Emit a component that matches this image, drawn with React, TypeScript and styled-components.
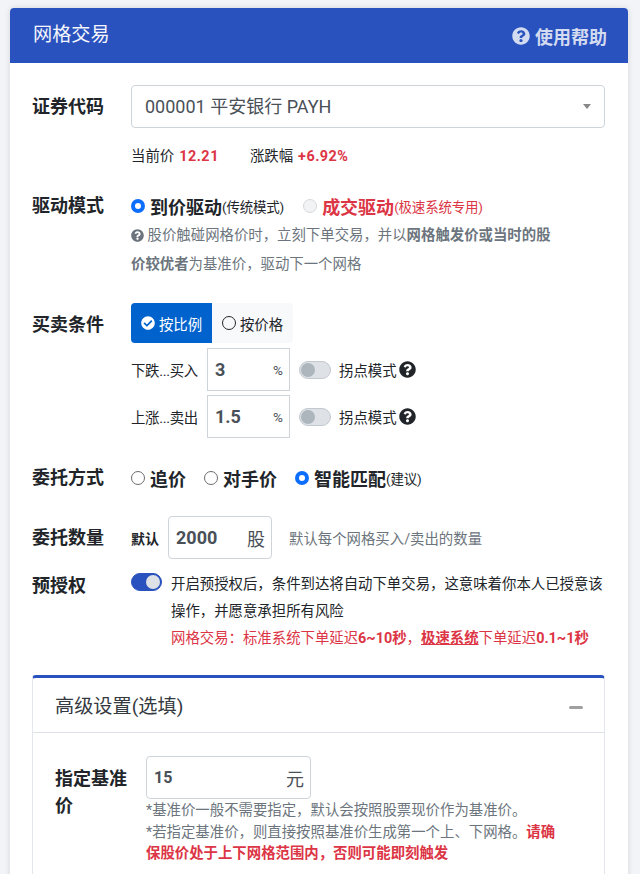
import React from "react";
import styled, { createGlobalStyle } from "styled-components";
import { FaQuestionCircle, FaCheckCircle } from "react-icons/fa";

const GlobalStyle = createGlobalStyle`
	html, body { margin: 0; height: 874px; overflow: hidden; background: #f3f4f8; }
	body { font-family: Roboto, "Noto Sans CJK SC", sans-serif; color: #212529; }
	* { box-sizing: border-box; }
`;

export default function App() {
	return (
		<Page>
			<GlobalStyle />
			<Card>
				<Header>
					<Title>网格交易</Title>
					<Help>
						<FaQuestionCircle size={18} />
						使用帮助
					</Help>
				</Header>

				<Body>
					{/* SECTION Code */}
					<Row $top={22}>
						<Label $line={43}>证券代码</Label>
						<Content>
							<Select>
								000001 平安银行 PAYH
								<Caret />
							</Select>
							<Quote>
								<span>当前价</span>
								<Up>12.21</Up>
								<QuoteGap>涨跌幅</QuoteGap>
								<Up>+6.92%</Up>
							</Quote>
						</Content>
					</Row>

					{/* SECTION Drive mode */}
					<Row $top={26}>
						<Label $line={24}>驱动模式</Label>
						<Content>
							<Options>
								<Radio $checked />
								<OptionText>到价驱动</OptionText>
								<Small>(传统模式)</Small>
								<Radio $disabled $gap={19} />
								<OptionText $red>成交驱动</OptionText>
								<Small $red>(极速系统专用)</Small>
							</Options>
							<Hint>
								<HintIcon><FaQuestionCircle size={13} /></HintIcon> 股价触碰网格价时，立刻下单交易，并以<b>网格触发价或当时的股价较优者</b>为基准价，驱动下一个网格
							</Hint>
						</Content>
					</Row>

					{/* SECTION Conditions */}
					<Row $top={25}>
						<Label $line={44}>买卖条件</Label>
						<Content>
							<Segments>
								<Segment $active>
									<FaCheckCircle size={14} />
									按比例
								</Segment>
								<Segment>
									<Hollow />
									按价格
								</Segment>
							</Segments>
							<Condition label="下跌...买入" value="3" />
							<Condition label="上涨...卖出" value="1.5" />
						</Content>
					</Row>

					{/* SECTION Order type */}
					<Row $top={26}>
						<Label $line={28}>委托方式</Label>
						<Options $height={28}>
							<Radio />
							<OptionText>追价</OptionText>
							<Radio $gap={18} />
							<OptionText>对手价</OptionText>
							<Radio $checked $gap={18} />
							<OptionText>智能匹配</OptionText>
							<Small>(建议)</Small>
						</Options>
					</Row>

					{/* SECTION Quantity */}
					<Row $top={24}>
						<Label $line={43}>委托数量</Label>
						<Quantity>
							<Default>默认</Default>
							<UnitInput $width={104}>
								<Value>2000</Value>
								<Unit>股</Unit>
							</UnitInput>
							<Muted>默认每个网格买入/卖出的数量</Muted>
						</Quantity>
					</Row>

					{/* SECTION Pre-auth */}
					<Row $top={14}>
						<Label $line={26}>预授权</Label>
						<AuthRow>
							<Toggle $on $width={31} />
							<AuthText>
								开启预授权后，条件到达将自动下单交易，这意味着你本人已授意该操作，并愿意承担所有风险
								<Warn>
									网格交易：标准系统下单延迟<b>6~10秒</b>，<u><b>极速系统</b></u>下单延迟<b>0.1~1秒</b>
								</Warn>
							</AuthText>
						</AuthRow>
					</Row>

					{/* SECTION Advanced */}
					<Panel>
						<PanelHeader>
							高级设置(选填)
							<Minus />
						</PanelHeader>
						<PanelBody>
							<BaseLabel>指定基准价</BaseLabel>
							<Content>
								<UnitInput $width={165} $rounded>
									<BaseValue>15</BaseValue>
									<Unit>元</Unit>
								</UnitInput>
								<Notes>
									*基准价一般不需要指定，默认会按照股票现价作为基准价。
									<br />
									*若指定基准价，则直接按照基准价生成第一个上、下网格。
									<strong>请确保股价处于上下网格范围内，否则可能即刻触发</strong>
								</Notes>
							</Content>
						</PanelBody>
					</Panel>
				</Body>
			</Card>
		</Page>
	);
}

function Condition({ label, value }: { label: string; value: string }) {
	return (
		<ConditionRow>
			<ConditionLabel>{label}</ConditionLabel>
			<UnitInput $width={83} $square>
				<Value>{value}</Value>
				<Percent>%</Percent>
			</UnitInput>
			<Toggle $width={32} />
			<ToggleText>拐点模式</ToggleText>
			<FaQuestionCircle size={17} color="#212529" />
		</ConditionRow>
	);
}

const Page = styled.div`
	height: 874px;
	padding: 8px 12px 0 10px;
	overflow: hidden;
`;

const Card = styled.div`
	height: 900px;
	background: #fff;
	border-radius: 4px 4px 0 0;
	box-shadow: 0 0 6px rgba(0, 0, 0, 0.12);
	overflow: hidden;
`;

const Header = styled.div`
	height: 55px;
	background: #2a52be;
	padding: 0 21px 0 23px;
	display: flex;
	align-items: center;
	justify-content: space-between;
`;

const Title = styled.div`
	font-size: 19.2px;
	color: #f4f6fc;
	margin-top: -6px;
`;

const Help = styled.div`
	display: flex;
	align-items: center;
	gap: 5px;
	font-size: 18px;
	font-weight: 700;
	color: #d3dbf1;
`;

const Body = styled.div`
	padding: 0 23px 0 22px;
`;

const Row = styled.div<{ $top: number }>`
	display: flex;
	align-items: flex-start;
	margin-top: ${(p) => p.$top}px;
`;

const Label = styled.div<{ $line: number }>`
	flex: none;
	width: 99px;
	font-size: 18px;
	font-weight: 700;
	line-height: ${(p) => p.$line}px;
	color: #212529;
`;

const Content = styled.div`
	flex: 1;
	min-width: 0;
`;

const Select = styled.div`
	position: relative;
	height: 43px;
	border: 1px solid #ced4da;
	border-radius: 4px;
	padding: 0 13px;
	font-size: 18px;
	line-height: 41px;
	color: #495057;
`;

const Caret = styled.i`
	position: absolute;
	right: 13px;
	top: 18px;
	border-top: 5px solid #888;
	border-left: 4px solid transparent;
	border-right: 4px solid transparent;
`;

const Quote = styled.div`
	display: flex;
	align-items: center;
	gap: 5px;
	margin-top: 18px;
	font-size: 14.4px;
	line-height: 22px;
`;

const QuoteGap = styled.span`
	margin-left: 26px;
`;

const Up = styled.span`
	color: #dc3545;
	font-weight: 700;
	letter-spacing: 0.5px;
`;

const Options = styled.div<{ $height?: number }>`
	display: flex;
	align-items: center;
	height: ${(p) => p.$height ?? 24}px;
`;

const Radio = styled.i<{ $checked?: boolean; $disabled?: boolean; $gap?: number }>`
	flex: none;
	width: 14px;
	height: 14px;
	border-radius: 50%;
	margin-left: ${(p) => p.$gap ?? 0}px;
	margin-right: 5px;
	border: ${(p) => (p.$checked ? "4px solid #0d6efd" : p.$disabled ? "1px solid #d5d9dd" : "1px solid #6c6c6c")};
	background: ${(p) => (p.$disabled ? "#f1f3f5" : "#fff")};
`;

const OptionText = styled.span<{ $red?: boolean }>`
	font-size: 18px;
	font-weight: 700;
	color: ${(p) => (p.$red ? "#dc3545" : "#212529")};
`;

const Small = styled.span<{ $red?: boolean }>`
	font-size: 13.5px;
	letter-spacing: -0.2px;
	color: ${(p) => (p.$red ? "#dc3545" : "#212529")};
`;

const Hint = styled.div`
	margin-top: 4px;
	font-size: 14.4px;
	line-height: 27px;
	color: #6c757d;
	padding-right: 45px;
`;

const HintIcon = styled.span`
	vertical-align: -2px;
`;

const Segments = styled.div`
	display: inline-flex;
	height: 40px;
	margin-bottom: 1px;
	background: #f8f9fa;
	border-radius: 4px;
	overflow: hidden;
`;

const Segment = styled.div<{ $active?: boolean }>`
	display: flex;
	align-items: center;
	justify-content: center;
	gap: 4px;
	width: 81px;
	font-size: 14.4px;
	background: ${(p) => (p.$active ? "#0062cc" : "transparent")};
	color: ${(p) => (p.$active ? "#fff" : "#212529")};
`;

const Hollow = styled.i`
	width: 14px;
	height: 14px;
	border: 1.5px solid #212529;
	border-radius: 50%;
`;

const ConditionRow = styled.div`
	display: flex;
	align-items: center;
	margin-top: 4px;
	height: 43px;
`;

const ConditionLabel = styled.span`
	width: 76px;
	font-size: 14.4px;
	letter-spacing: -0.3px;
`;

const UnitInput = styled.div<{ $width: number; $square?: boolean; $rounded?: boolean }>`
	flex: none;
	display: flex;
	align-items: center;
	justify-content: space-between;
	width: ${(p) => p.$width}px;
	height: 43px;
	border: 1px solid #ced4da;
	border-radius: ${(p) => (p.$square ? 0 : 4)}px;
	padding: 0 6px 0 7px;
`;

const Value = styled.span`
	font-size: 18px;
	font-weight: 700;
	color: #495057;
`;

const BaseValue = styled(Value)`
	font-size: 16px;
`;

const Percent = styled.span`
	font-size: 13.5px;
	color: #495057;
`;

const Unit = styled.span`
	font-size: 18px;
	color: #495057;
`;

const Toggle = styled.i<{ $on?: boolean; $width: number }>`
	flex: none;
	position: relative;
	width: ${(p) => p.$width}px;
	height: 18px;
	border-radius: 9px;
	border: 1px solid ${(p) => (p.$on ? "#2a52be" : "#c3c9d0")};
	background: ${(p) => (p.$on ? "#2a52be" : "#dee2e6")};
	margin-left: ${(p) => (p.$on ? 0 : 9)}px;
	&::after {
		content: "";
		position: absolute;
		top: 1px;
		width: 14px;
		height: 14px;
		border-radius: 50%;
		left: ${(p) => (p.$on ? "auto" : "1px")};
		right: ${(p) => (p.$on ? "1px" : "auto")};
		background: ${(p) => (p.$on ? "#dee2e6" : "#adb5bd")};
	}
`;

const ToggleText = styled.span`
	margin: 0 2px 0 8px;
	font-size: 14.4px;
`;

const Quantity = styled.div`
	display: flex;
	align-items: center;
	height: 43px;
	flex: 1;
`;

const Default = styled.span`
	width: 37px;
	font-size: 14px;
	font-weight: 700;
`;

const Muted = styled.span`
	margin-left: 17px;
	font-size: 14.4px;
	color: #6c757d;
`;

const AuthRow = styled.div`
	display: flex;
	align-items: flex-start;
	flex: 1;
	gap: 9px;
`;

const AuthText = styled.div`
	flex: 1;
	font-size: 14.4px;
	line-height: 27px;
	color: #212529;
	margin-top: -2px;
`;

const Warn = styled.div`
	color: #dc3545;
	white-space: nowrap;
`;

const Panel = styled.div`
	margin-top: 23px;
	border-top: 3px solid #2a52be;
	border-left: 1px solid #e3e6ea;
	border-right: 1px solid #e3e6ea;
	border-radius: 4px 4px 0 0;
	height: 220px;
`;

const PanelHeader = styled.div`
	display: flex;
	align-items: center;
	justify-content: space-between;
	height: 55px;
	padding: 0 21px 0 22px;
	border-bottom: 1px solid #dee2e6;
	font-size: 19.2px;
	color: #343a40;
`;

const Minus = styled.i`
	width: 14px;
	height: 3px;
	margin-top: 5px;
	border-radius: 2px;
	background: #a0a0a0;
`;

const PanelBody = styled.div`
	display: flex;
	align-items: flex-start;
	padding: 23px 45px 0 22px;
`;

const BaseLabel = styled.div`
	flex: none;
	width: 91px;
	padding-right: 13px;
	font-size: 18px;
	font-weight: 700;
	line-height: 27px;
	margin-top: 9px;
`;

const Notes = styled.div`
	margin-top: 1px;
	font-size: 14.4px;
	line-height: 21.6px;
	color: #6c757d;
	strong {
		color: #dc3545;
	}
`;
